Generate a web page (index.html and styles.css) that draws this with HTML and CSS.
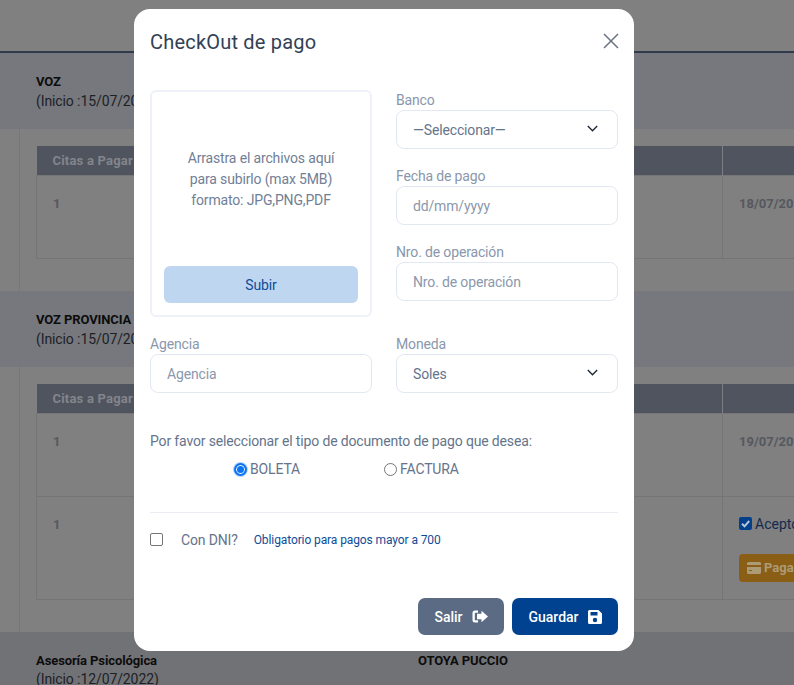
FILE: index.html
```html
<!DOCTYPE html>
<html lang="es">
<head>
<meta charset="utf-8">
<title>CheckOut de pago</title>
<link rel="stylesheet" href="styles.css">
</head>
<body>
<div class="page">
  <div class="topbar"></div>
  <section class="band">
    <div class="band-name"><strong>VOZ</strong><span>(Inicio :15/07/2022)</span></div>
  </section>
  <section class="panel">
    <table class="citas">
      <tr><th class="c1">Citas a Pagar</th><th class="c2"></th><th></th></tr>
      <tr class="r83"><td class="c1">1</td><td class="c2"></td><td class="date">18/07/2022</td></tr>
    </table>
  </section>
  <section class="band">
    <div class="band-name"><strong>VOZ PROVINCIA</strong><span>(Inicio :15/07/2022)</span></div>
  </section>
  <section class="panel panel-tall">
    <table class="citas">
      <tr><th class="c1">Citas a Pagar</th><th class="c2"></th><th></th></tr>
      <tr class="r83"><td class="c1">1</td><td class="c2"></td><td class="date">19/07/2022</td></tr>
      <tr class="r103"><td class="c1">1</td><td class="c2"></td><td class="accept">
        <div class="accept-line"><span class="check"><svg viewBox="0 0 13 13" width="13" height="13"><path d="M3 6.800l2.500 2.500L10.200 4" fill="none" stroke="#b9c4d4" stroke-width="2"/></svg></span><span>Acepto</span></div>
        <div class="pay"><svg viewBox="0 0 14 12" width="14" height="12"><path d="M0 1.500A1.500 1.500 0 0 1 1.500 0h11A1.500 1.500 0 0 1 14 1.500V3H0zM0 5h14v5.500a1.500 1.500 0 0 1-1.500 1.500h-11A1.500 1.500 0 0 1 0 10.500zM2 8v1h3V8z" fill="#ad9b78"/></svg><span>Pagar</span></div>
      </td></tr>
    </table>
  </section>
  <section class="band band-last">
    <div class="band-name"><strong>Asesoría Psicológica</strong><span>(Inicio :12/07/2022)</span></div>
    <strong class="band-teacher">OTOYA PUCCIO</strong>
  </section>
</div>

<div class="modal">
  <header class="modal-head">
    <h1>CheckOut de pago</h1>
    <svg class="close" viewBox="0 0 16 16" width="16" height="16"><path d="M1 1l14 14M15 1L1 15" fill="none" stroke="#6b7280" stroke-width="1.500"/></svg>
  </header>
  <div class="form-top">
    <div class="drop">
      <p>Arrastra el archivos aquí<br>para subirlo (max 5MB)<br>formato: JPG,PNG,PDF</p>
      <div class="upload">Subir</div>
    </div>
    <div class="col">
      <label class="lbl">Banco</label>
      <div class="field val">—Seleccionar—<svg class="chev" viewBox="0 0 11 7" width="11" height="7"><path d="M.8 1l4.700 4.700L10.200 1" fill="none" stroke="#1f2937" stroke-width="1.400"/></svg></div>
      <label class="lbl">Fecha de pago</label>
      <div class="field ph">dd/mm/yyyy</div>
      <label class="lbl">Nro. de operación</label>
      <div class="field ph">Nro. de operación</div>
    </div>
    <div class="col">
      <label class="lbl">Agencia</label>
      <div class="field ph">Agencia</div>
    </div>
    <div class="col">
      <label class="lbl">Moneda</label>
      <div class="field val">Soles<svg class="chev" viewBox="0 0 11 7" width="11" height="7"><path d="M.8 1l4.700 4.700L10.200 1" fill="none" stroke="#1f2937" stroke-width="1.400"/></svg></div>
    </div>
  </div>
  <p class="doc-q">Por favor seleccionar el tipo de documento de pago que desea:</p>
  <div class="radios">
    <span class="radio-item"><span class="radio on"></span>BOLETA</span>
    <span class="radio-item"><span class="radio"></span>FACTURA</span>
  </div>
  <hr class="sep">
  <div class="dni">
    <span class="box"></span>
    <span class="dni-l">Con DNI?</span>
    <span class="dni-n">Obligatorio para pagos mayor a 700</span>
  </div>
  <footer class="actions">
    <div class="btn btn-exit">Salir<svg viewBox="0 0 16 13" width="16" height="13"><path d="M6 .5H3A2.500 2.500 0 0 0 .5 3v7A2.500 2.500 0 0 0 3 12.500h3v-2.200H3.300a.5.5 0 0 1-.5-.5V3.200a.5.5 0 0 1 .5-.5H6zM9.500.8v3H5v5.400h4.500v3L16 6.500z" fill="#fff"/></svg></div>
    <div class="btn btn-save">Guardar<svg viewBox="0 0 14 14" width="14" height="14"><path fill-rule="evenodd" d="M1.500 0H10.500L14 3.500V12.500A1.500 1.500 0 0 1 12.500 14H1.500A1.500 1.500 0 0 1 0 12.500V1.500A1.500 1.500 0 0 1 1.500 0zM2.500 2v3.500h7V2zM7 7.800a2.200 2.200 0 1 0 0 4.400 2.200 2.200 0 0 0 0-4.400z" fill="#fff"/></svg></div>
  </footer>
</div>
</body>
</html>
```
FILE: styles.css
```css
* { box-sizing: border-box; }
html, body { margin: 0; padding: 0; height: 100%; overflow: hidden; }
body {
  width: 794px; height: 685px; position: relative;
  font-family: "Roboto", "Liberation Sans", sans-serif;
  background: #808080;
}
.page { height: 685px; overflow: hidden; }
.topbar { height: 53px; border-bottom: 2px solid #313b4b; position: relative; }
.band { height: 76px; background: #76787d; padding: 19px 36px 0; display: flex; color: #0c0c0c; font-size: 14px; line-height: 19px; letter-spacing: -.1px; }
.band-name { width: 382px; display: flex; flex-direction: column; }
.band-name span { color: #1d1f25; margin-top: 1px; }
.band strong, .band-teacher { font-weight: 700; font-size: 13px; white-space: nowrap; }
.band-last { height: 53px; background: #717276; padding-top: 19px; }
.band-last .band-name span { margin-top: 0; }
.panel { height: 162px; padding: 17px 0 0 36px; background: linear-gradient(to right, transparent 19px, #777 19px, #777 20px, transparent 20px); }
.panel-tall { height: 265px; }
.citas { border-collapse: collapse; width: 900px; table-layout: fixed; font-size: 13px; font-weight: 700; color: #55585f; }
.citas th { height: 29px; background: #50545e; border-right: 1px solid #7d7f84; text-align: left; padding: 0 16px; color: #82858c; letter-spacing: .2px; }
.citas td { border: 1px solid #757575; vertical-align: top; padding: 20px 16px 0; }
.citas .c1 { width: 330px; }
.citas .c2 { width: 356px; }
.r83 { height: 83px; }
.r103 { height: 103px; }
.citas .accept { padding: 19px 16px 0; color: #132a4d; font-weight: 400; font-size: 14px; }
.accept-line { display: flex; align-items: center; gap: 3px; }
.check { width: 13px; height: 13px; border-radius: 2px; background: #023f8d; display: block; }
.check svg { display: block; }
.pay { margin-top: 22px; width: 90px; height: 28px; background: #8a5e14; border-radius: 4px; display: flex; align-items: center; gap: 3px; padding-left: 8px; color: #ad9b78; font-size: 13px; font-weight: 700; }

.modal {
  position: absolute; left: 134px; top: 9px; width: 500px; height: 642px;
  background: #fff; border-radius: 16px; padding: 0 16px; color: #64748b;
  font-size: 14px; letter-spacing: -.15px;
}
.modal-head { height: 62px; display: flex; align-items: flex-start; justify-content: space-between; padding-top: 21px; }
.modal-head h1 { margin: 0; font-size: 20px; line-height: 24px; font-weight: 400; color: #334155; letter-spacing: .2px; }
.close { margin: 3px -1px 0 0; }
.form-top { display: grid; grid-template-columns: 222px 222px; grid-template-rows: 227px auto; column-gap: 24px; row-gap: 17px; margin-top: 19px; }
.col { display: flex; flex-direction: column; }
.drop { border: 2px solid #eef2f8; border-radius: 6px; padding: 0 12px 12px; display: flex; flex-direction: column; align-items: center; }
.drop p { margin: 56px 0 0; text-align: center; line-height: 21px; font-size: 14px; color: #718096; flex: 1; }
.upload { width: 194px; height: 37px; background: #bfd6f1; border-radius: 6px; color: #0f4c97; text-align: center; line-height: 38px; }
.lbl { display: block; height: 20px; line-height: 20px; font-size: 14px; color: #8a97ab; }
.col .field + .lbl { margin-top: 17px; }
.field { position: relative; height: 39px; border: 1px solid #e2e8f2; border-radius: 8px; line-height: 39px; padding-left: 16px; font-size: 14px; }
.ph { color: #8b98ad; }
.val { color: #64748b; }
.chev { position: absolute; right: 19px; top: 14px; }
.doc-q { margin: 38px 0 0; height: 21px; line-height: 20px; color: #64748b; font-size: 14px; }
.radios { display: flex; height: 21px; margin-top: 7px; padding-left: 84px; gap: 84px; line-height: 21px; color: #64748b; }
.radio-item { display: inline-flex; align-items: center; gap: 3px; }
.radio { width: 13px; height: 13px; border: 1px solid #767676; border-radius: 50%; display: block; background: #fff; }
.radio.on { border: 2px solid #0b74f1; box-shadow: inset 0 0 0 1px #fff, 0 0 0 1px #b5d4fa; background: #0b74f1; }
.sep { margin: 32px 0 0; border: 0; border-top: 1px solid #e9edf3; }
.dni { display: flex; align-items: center; height: 20px; margin-top: 16px; }
.box { width: 13px; height: 13px; border: 1px solid #767676; border-radius: 2px; }
.dni-l { margin-left: 18px; padding-top: 2px; color: #64748b; }
.dni-n { margin-left: 16px; padding-top: 2px; font-size: 12px; color: #0f4c97; letter-spacing: -.1px; }
.actions { display: flex; justify-content: flex-end; gap: 8px; margin-top: 49px; }
.btn { height: 37px; border-radius: 7px; color: #fff; font-weight: 500; display: flex; align-items: center; justify-content: center; gap: 9px; font-size: 14px; letter-spacing: 0; }
.btn-exit { width: 86px; background: #5b6b84; }
.btn-save { width: 106px; background: #00428f; }
```
